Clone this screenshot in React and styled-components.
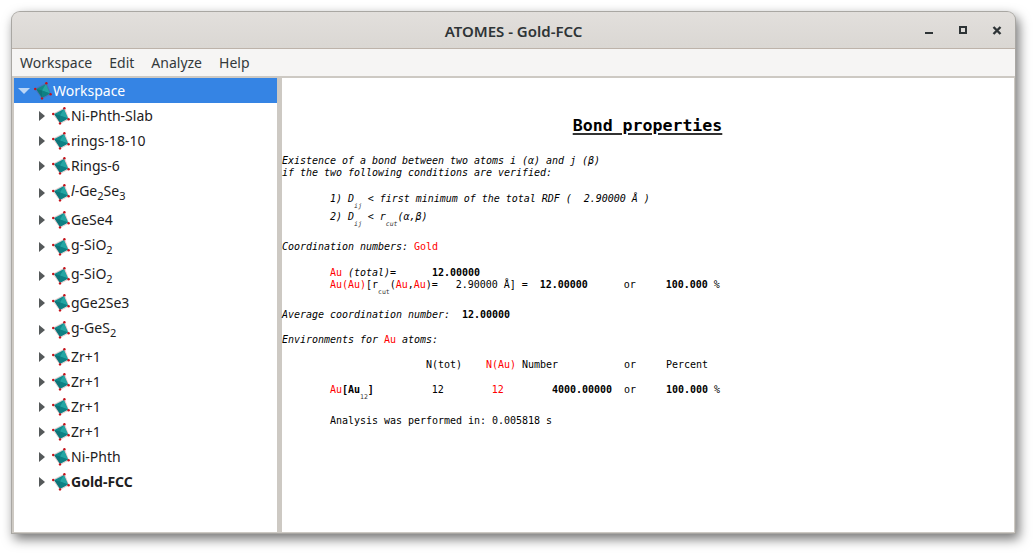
import React from "react";
import styled, { createGlobalStyle } from "styled-components";

const Global = createGlobalStyle`
  html, body { margin: 0; padding: 0; background: #fff; overflow: hidden; height: 554px; }
  body { box-sizing: border-box; padding: 12px 0 0 12px; }
`;

const Window = styled.div`
  width: 1003px; height: 521px; box-sizing: border-box;
  display: flex; flex-direction: column;
  border-radius: 8px 8px 0 0;
  background: #cdc9c3;
  box-shadow: 0 0 0 1px #a9a7a3, 3px 5px 12px 1px rgba(0,0,0,.55);
  font-family: "Noto Sans", sans-serif;
  overflow: hidden;
`;

const TitleBar = styled.div`
  height: 37px; flex: none; box-sizing: border-box;
  display: flex; align-items: center; justify-content: center; position: relative;
  background: linear-gradient(#e2dfdc, #dad7d3);
  border-bottom: 1px solid #bdb3aa;
  color: #2e3436; font-size: 15px; font-weight: 600; padding-top: 1px;
`;

const Controls = styled.div`
  position: absolute; right: 0; top: 0; bottom: 0;
  display: flex; align-items: center; gap: 0;
`;

const Ctrl = styled.svg`
  width: 34px; height: 16px; display: block; fill: none; stroke: #2e3436;
`;

const MenuBar = styled.div`
  height: 27px; flex: none; display: flex; align-items: center;
  gap: 17px; padding: 0 0 0 8px; background: #f6f5f4;
  color: #33393b; font-size: 14px; box-sizing: border-box;
`;

const Body = styled.div`
  flex: 1; display: flex; min-height: 0; padding: 2px 1px 1px 2px;
`;

const TreePane = styled.div`
  width: 263px; flex: none; background: #fff; display: flex; flex-direction: column;
`;

const TreeRow = styled.div`
  height: ${p => p.$h || 25}px; flex: none; box-sizing: border-box;
  display: flex; align-items: center;
  padding-left: ${p => (p.$root ? 4 : 25)}px;
  background: ${p => (p.$root ? "#3584e4" : "#fff")};
  color: ${p => (p.$root ? "#fff" : "#1d2021")};
  font-size: 14px; font-weight: ${p => (p.$bold ? 700 : 400)};
  white-space: nowrap;
`;

const ArrowRight = styled.span`
  width: 0; height: 0; flex: none; margin-right: 7px;
  border-left: 6px solid #55595a; border-top: 5.5px solid transparent; border-bottom: 5.5px solid transparent;
`;

const ArrowDown = styled.span`
  width: 0; height: 0; flex: none; margin-right: 4px;
  border-top: 6px solid #bcd6f6; border-left: 6px solid transparent; border-right: 6px solid transparent;
`;

const Label = styled.span`
  margin-left: 1px;
  margin-bottom: ${p => (p.$raised ? 4 : 0)}px;
  sub { font-size: 11px; line-height: 0; vertical-align: -4px; }
  i { font-style: italic; }
`;

const IconSvg = styled.svg`
  width: 18px; height: 18px; flex: none; display: block;
`;

const Divider = styled.div`
  width: 5px; flex: none; background: #cdc9c3;
`;

const Report = styled.div`
  flex: 1; background: #fff; display: flex; flex-direction: column;
  font-family: "DejaVu Sans Mono", monospace; font-size: 10px; color: #000;
  padding-top: 37px; min-width: 0; letter-spacing: -0.02px;
`;

const ReportTitle = styled.div`
  height: 21px; text-align: center; font-size: 16.6px; font-weight: 700; line-height: 21px;
  text-decoration: underline; text-decoration-thickness: 2px; text-underline-offset: 2px;
  text-decoration-color: #333; margin-bottom: 19px; padding-right: 1px;
`;

const Line = styled.div`
  height: ${p => p.$h || 12}px; line-height: 12px; white-space: pre;
  margin-top: ${p => p.$mt || 0}px;
  font-style: ${p => (p.$it ? "italic" : "normal")};
`;

const Red = styled.span`color: #f00;`;
const RedUpright = styled(Red)`font-style: normal;`;
const Bold = styled.b`font-weight: 700;`;
const BoldUpright = styled(Bold)`font-style: normal;`;
const Sub = styled.span`
  font-size: 6.5px; vertical-align: -6px; line-height: 0; color: #333;
`;
const Gap = styled.span`
  display: inline-block; width: ${p => p.$w}px;
`;

function Molecule() {
  return (
    <IconSvg viewBox="0 0 18 18">
      <path d="M12.4 1.2 L1.2 7 L8 16.4 L16.6 12.2 Z" fill="none" stroke="#a8343a" strokeWidth=".3" />
      <path d="M11.9 2 L2.2 7 L8 15.8 L16 11.6 Z" fill="#118a8c" />
      <path d="M11.9 2 L8 8.6 L16 11.6 Z" fill="#24a5a3" />
      <path d="M2.2 7 L8 8.6 L8 15.8 Z" fill="#0e7478" />
      <path d="M8 8.6 L16 11.6 L8 15.8 Z" fill="#0f8084" />
      <g fill="#c4121a">
        <circle cx="12.4" cy="1.2" r="1.2" />
        <circle cx="1.2" cy="7" r="1.2" />
        <circle cx="8" cy="16.4" r="1.2" />
        <circle cx="16.6" cy="12.2" r="1.2" />
      </g>
    </IconSvg>
  );
}

const items = [
  { t: "Ni-Phth-Slab" },
  { t: "rings-18-10" },
  { t: "Rings-6" },
  { t: <><i>l</i>-Ge<sub>2</sub>Se<sub>3</sub></>, h: 29, raised: true },
  { t: "GeSe4", h: 25 },
  { t: <>g-SiO<sub>2</sub></>, h: 29, raised: true },
  { t: <>g-SiO<sub>2</sub></>, h: 29, raised: true },
  { t: "gGe2Se3", h: 25 },
  { t: <>g-GeS<sub>2</sub></>, h: 29, raised: true },
  { t: "Zr+1" },
  { t: "Zr+1" },
  { t: "Zr+1" },
  { t: "Zr+1" },
  { t: "Ni-Phth" },
  { t: "Gold-FCC", b: true },
];

export default function App() {
  return (
    <>
      <Global />
      <Window>
        <TitleBar>
          ATOMES - Gold-FCC
          <Controls>
            <Ctrl viewBox="0 0 34 16"><path d="M12 11h8" strokeWidth="2" /></Ctrl>
            <Ctrl viewBox="0 0 34 16"><rect x="13" y="5" width="6" height="6" strokeWidth="2" /></Ctrl>
            <Ctrl viewBox="0 0 34 16"><path d="M12.5 5l7 7M19.5 5l-7 7" strokeWidth="2.4" /></Ctrl>
          </Controls>
        </TitleBar>
        <MenuBar>
          <span>Workspace</span>
          <span>Edit</span>
          <span>Analyze</span>
          <span>Help</span>
        </MenuBar>
        <Body>
          <TreePane>
            <TreeRow $root>
              <ArrowDown />
              <Molecule />
              <Label>Workspace</Label>
            </TreeRow>
            {items.map((it, i) => (
              <TreeRow key={i} $h={it.h} $bold={it.b}>
                <ArrowRight />
                <Molecule />
                <Label $raised={it.raised}>{it.t}</Label>
              </TreeRow>
            ))}
          </TreePane>
          <Divider />
          <Report>
            <ReportTitle>Bond properties</ReportTitle>
            <Line $it>Existence of a bond between two atoms i (α) and j (β)</Line>
            <Line $it>if the two following conditions are verified:</Line>
            <Line $it $mt={14} $h={18}>{"        1) D"}<Sub>ij</Sub>{" < first minimum of the total RDF (  2.90000 Å )"}</Line>
            <Line $it $h={18}>{"        2) D"}<Sub>ij</Sub>{" < r"}<Sub>cut</Sub>(α,β)</Line>
            <Line $it $mt={12}>Coordination numbers: <RedUpright>Gold</RedUpright></Line>
            <Line $mt={14}><Red>{"        Au"}</Red><i> (total)</i>{"=      "}<Bold>12.00000</Bold></Line>
            <Line><Red>{"        Au(Au)"}</Red>[r<Sub>cut</Sub>(<Red>Au</Red>,<Red>Au</Red>){"=   2.90000 Å] =  "}<Bold>12.00000</Bold>{"      or     "}<Bold>100.000</Bold> %</Line>
            <Line $it $mt={18}>Average coordination number:  <BoldUpright>12.00000</BoldUpright></Line>
            <Line $it $mt={13}>Environments for <RedUpright>Au</RedUpright> atoms:</Line>
            <Line $mt={13}>{"                        N(tot)    "}<Red>N(Au)</Red>{" Number           or     Percent"}</Line>
            <Line $mt={13}><Red>{"        Au"}</Red><Bold>[Au</Bold><Sub>12</Sub><Bold>]</Bold><Gap $w={58} />{"12        "}<Red>12</Red>{"        "}<Bold>4000.00000</Bold>{"  or     "}<Bold>100.000</Bold> %</Line>
            <Line $mt={19}>{"        Analysis was performed in: 0.005818 s"}</Line>
          </Report>
        </Body>
      </Window>
    </>
  );
}
